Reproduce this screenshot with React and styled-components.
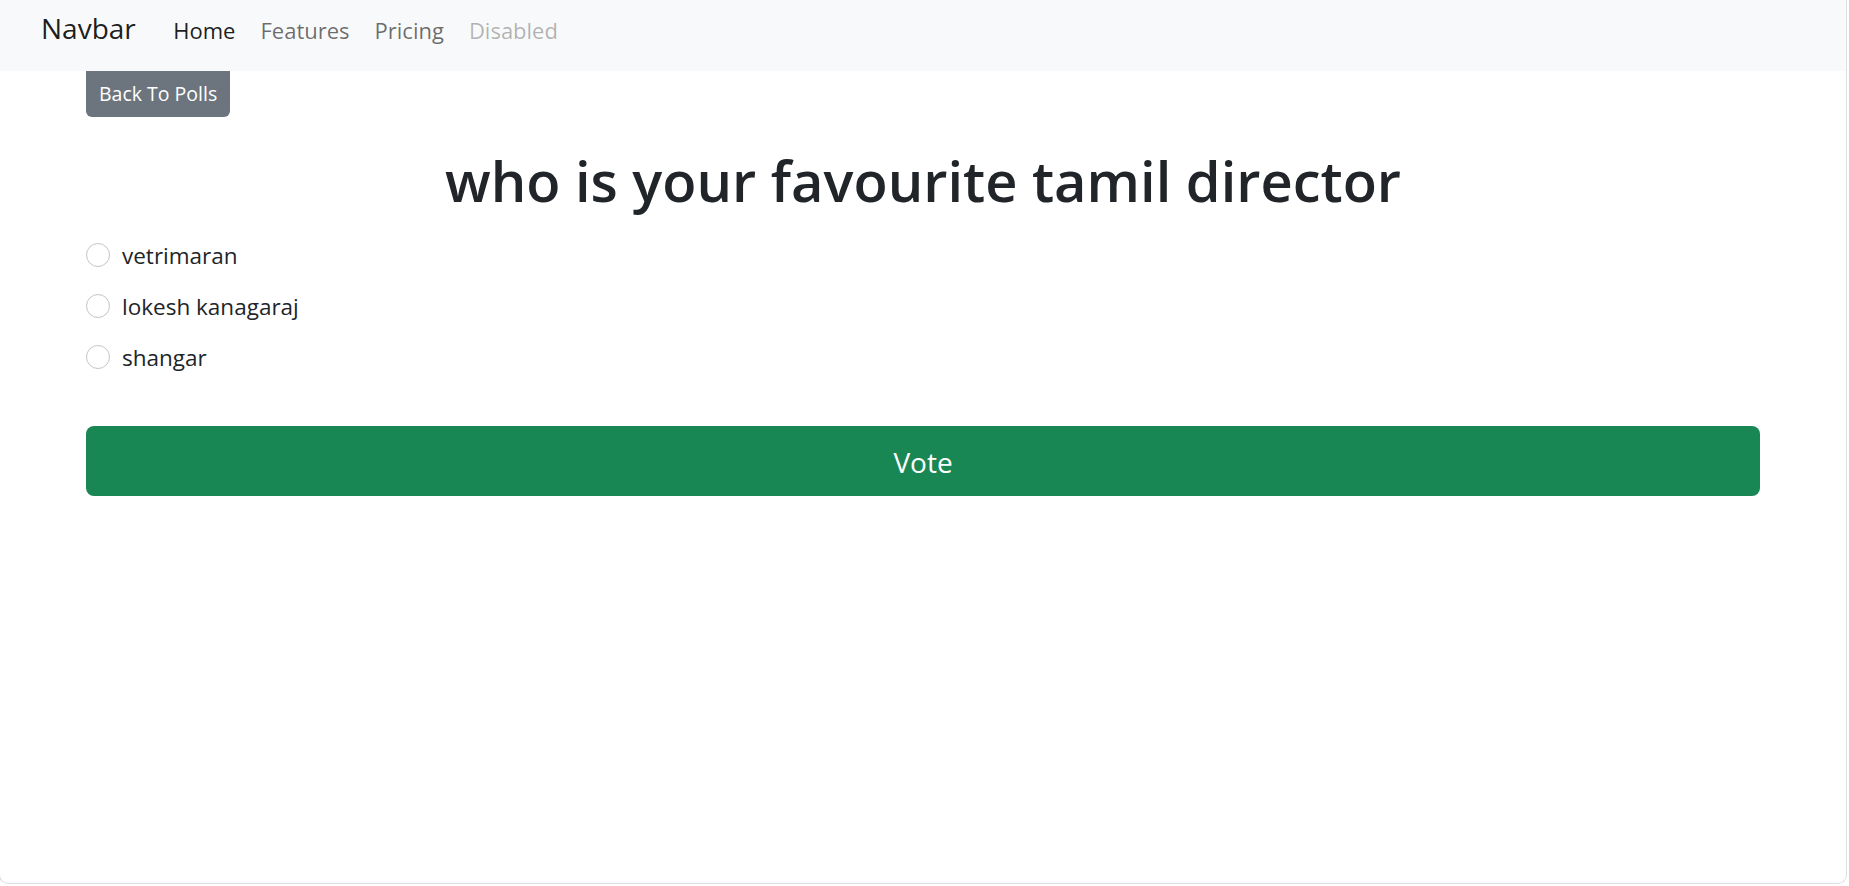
import React, {useState} from "react";
import styled, {createGlobalStyle} from "styled-components";

const GlobalStyle = createGlobalStyle`
  html, body {
    margin: 0;
    padding: 0;
    background: #ffffff;
  }

  body {
    font-family: 'Open Sans', 'Noto Sans', sans-serif;
    color: #212529;
  }
`;

const Frame = styled.div`
  box-sizing: border-box;
  width: 1848px;
  height: 884px;
  margin-left: -1px;
  border: 1px solid #dedede;
  border-top: none;
  border-radius: 0 0 9px 9px;
  overflow: hidden;
  background: #ffffff;
`;

const Nav = styled.nav`
  display: flex;
  align-items: baseline;
  box-sizing: border-box;
  height: 71px;
  padding: 10px 40px 0 41px;
  background: #f8f9fa;
`;

const Brand = styled.a`
  margin-right: 25px;
  font-size: 28px;
  line-height: 36px;
  color: rgba(0, 0, 0, 0.9);
  text-decoration: none;
`;

const NavLink = styled.a`
  padding: 0 12.5px;
  font-size: 22px;
  line-height: 36px;
  text-decoration: none;
  color: ${({active, disabled}) =>
    active ? "rgba(0, 0, 0, 0.9)" : disabled ? "rgba(0, 0, 0, 0.3)" : "rgba(0, 0, 0, 0.58)"};
`;

const Container = styled.main`
  display: flex;
  flex-direction: column;
  align-items: flex-start;
  padding: 0 86px;
`;

const BackButton = styled.button`
  height: 46px;
  padding: 0 13px;
  border: none;
  border-radius: 0 0 6px 6px;
  background: #6c757d;
  color: #ffffff;
  font-family: inherit;
  font-size: 19.5px;
  line-height: 46px;
  cursor: pointer;
`;

const Title = styled.h1`
  align-self: stretch;
  margin: 30px 0 0;
  font-size: 56px;
  font-weight: 600;
  line-height: 66px;
  text-align: center;
  color: #212529;
`;

const Options = styled.div`
  display: flex;
  flex-direction: column;
  margin-top: 16px;
`;

const Option = styled.label`
  display: flex;
  align-items: center;
  gap: 12px;
  height: 51px;
  font-size: 22.5px;
  line-height: 30px;
  color: #212529;
  cursor: pointer;
`;

const Radio = styled.span`
  box-sizing: border-box;
  width: 24px;
  height: 24px;
  border-radius: 50%;
  border: 1px solid ${({checked}) => (checked ? "#0d6efd" : "#c4c4c4")};
  background: ${({checked}) => (checked ? "#0d6efd" : "#ffffff")};
  box-shadow: ${({checked}) => (checked ? "inset 0 0 0 5px #ffffff" : "none")};
`;

const OptionText = styled.span`
  padding-top: 3px;
`;

const VoteButton = styled.button`
  align-self: stretch;
  height: 70px;
  margin-top: 44px;
  border: none;
  border-radius: 8px;
  background: #198754;
  color: #ffffff;
  font-family: inherit;
  font-size: 28px;
  line-height: 70px;
  cursor: pointer;
`;

const choices = ["vetrimaran", "lokesh kanagaraj", "shangar"];

const App = () => {
  const [selected, setSelected] = useState(null);

  return (
    <>
      <GlobalStyle/>
      <Frame>
        <Nav>
          <Brand href="#">Navbar</Brand>
          <NavLink href="#" active>Home</NavLink>
          <NavLink href="#">Features</NavLink>
          <NavLink href="#">Pricing</NavLink>
          <NavLink disabled>Disabled</NavLink>
        </Nav>

        <Container>
          <BackButton>Back To Polls</BackButton>
          <Title>who is your favourite tamil director</Title>

          <Options>
            {choices.map((choice) => (
              <Option key={choice} onClick={() => setSelected(choice)}>
                <Radio checked={selected === choice}/>
                <OptionText>{choice}</OptionText>
              </Option>
            ))}
          </Options>

          <VoteButton>Vote</VoteButton>
        </Container>
      </Frame>
    </>
  );
};

export default App;
